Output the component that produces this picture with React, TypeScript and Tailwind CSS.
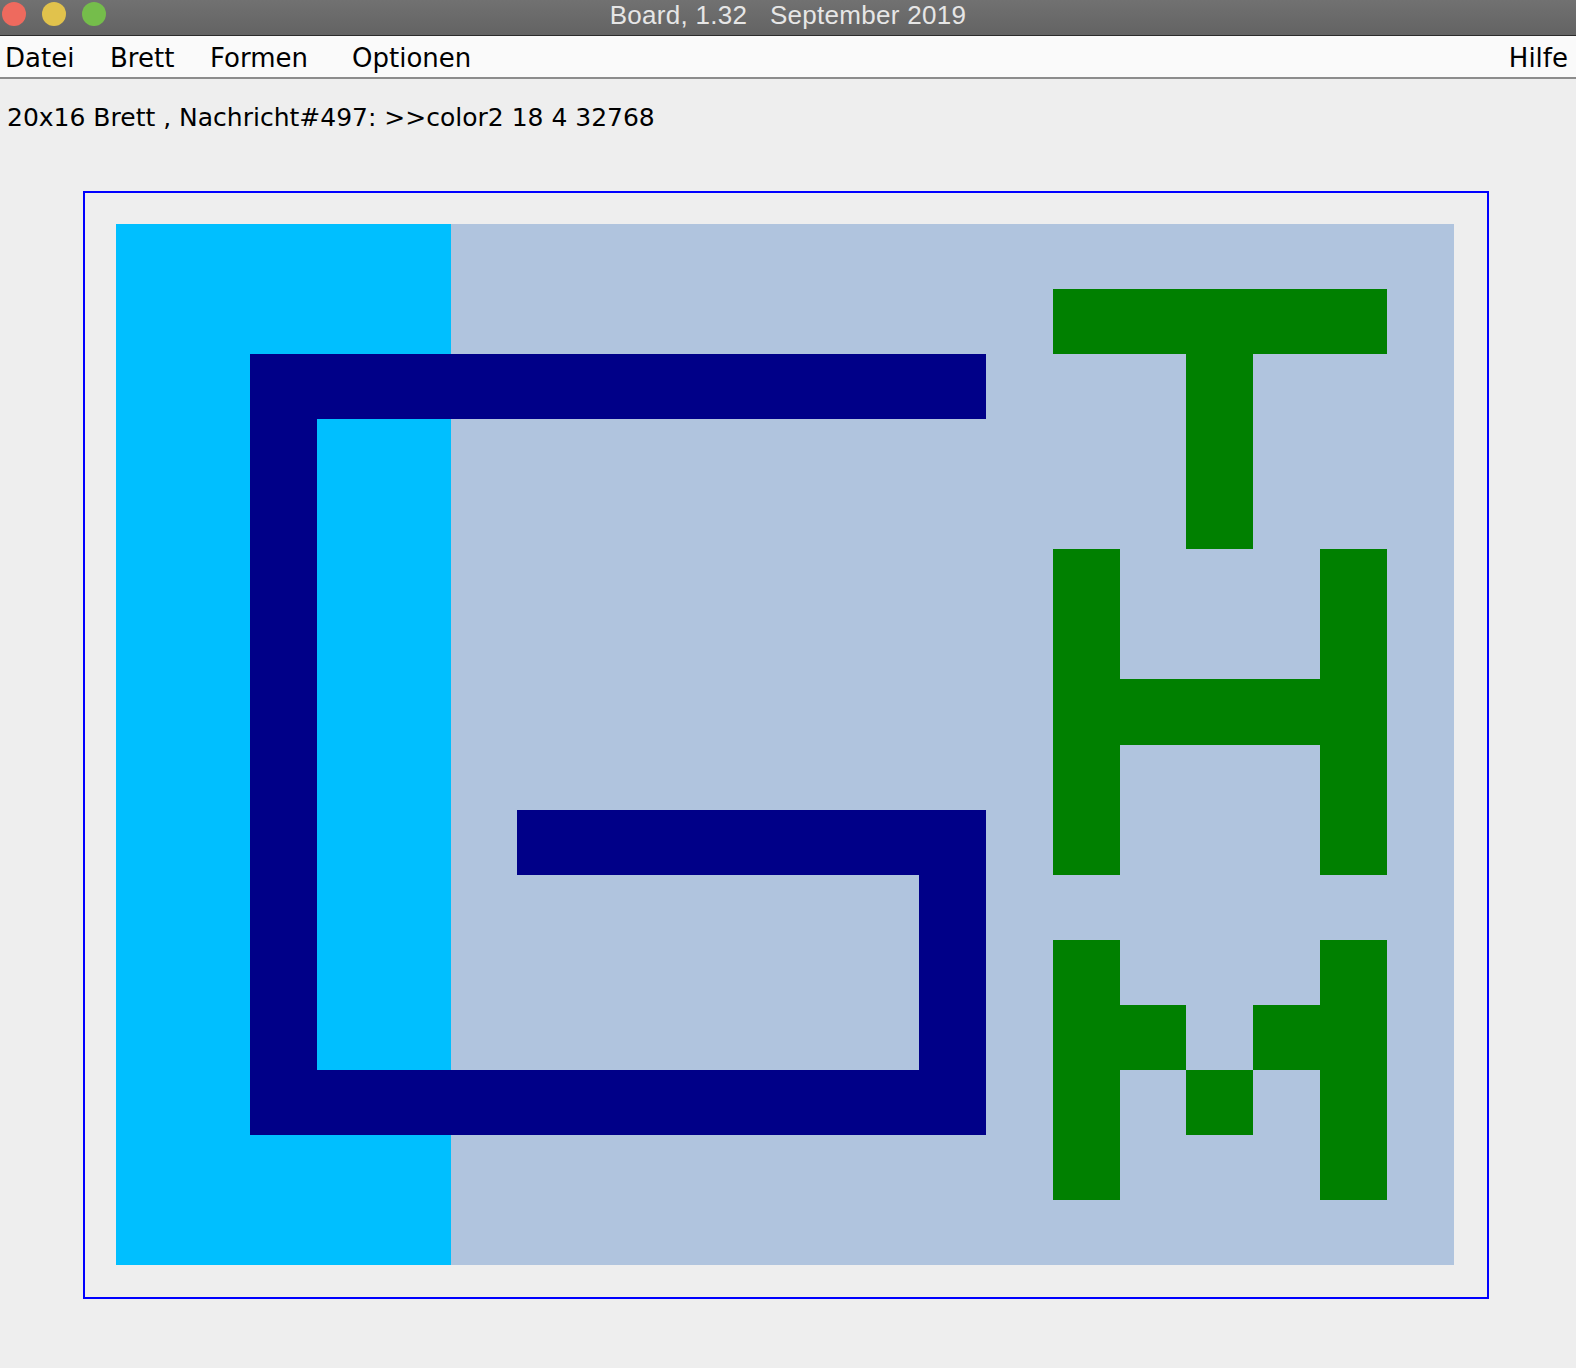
import React from "react";

const menuItems = [
  { label: "Datei", w: "w-[105px]" },
  { label: "Brett", w: "w-[100px]" },
  { label: "Formen", w: "w-[142px]" },
  { label: "Optionen", w: "w-[140px]" },
];

// rectangles on the 20x16 board, grid lines written out in full
const cells = [
  { cls: "col-start-1 col-end-6 row-start-1 row-end-17", color: "bg-[#00bfff]" },
  // G
  { cls: "col-start-3 col-end-14 row-start-3 row-end-4", color: "bg-[#000088]" },
  { cls: "col-start-3 col-end-4 row-start-3 row-end-15", color: "bg-[#000088]" },
  { cls: "col-start-3 col-end-14 row-start-14 row-end-15", color: "bg-[#000088]" },
  { cls: "col-start-13 col-end-14 row-start-10 row-end-15", color: "bg-[#000088]" },
  { cls: "col-start-7 col-end-14 row-start-10 row-end-11", color: "bg-[#000088]" },
  // T
  { cls: "col-start-15 col-end-20 row-start-2 row-end-3", color: "bg-[#008000]" },
  { cls: "col-start-17 col-end-18 row-start-3 row-end-6", color: "bg-[#008000]" },
  // H
  { cls: "col-start-15 col-end-16 row-start-6 row-end-11", color: "bg-[#008000]" },
  { cls: "col-start-19 col-end-20 row-start-6 row-end-11", color: "bg-[#008000]" },
  { cls: "col-start-15 col-end-20 row-start-8 row-end-9", color: "bg-[#008000]" },
  // M
  { cls: "col-start-15 col-end-16 row-start-12 row-end-16", color: "bg-[#008000]" },
  { cls: "col-start-19 col-end-20 row-start-12 row-end-16", color: "bg-[#008000]" },
  { cls: "col-start-16 col-end-17 row-start-13 row-end-14", color: "bg-[#008000]" },
  { cls: "col-start-18 col-end-19 row-start-13 row-end-14", color: "bg-[#008000]" },
  { cls: "col-start-17 col-end-18 row-start-14 row-end-15", color: "bg-[#008000]" },
];

const TitleBar = () => (
  <div className="relative h-[36px] bg-gradient-to-b from-[#717171] to-[#636363] border-b border-[#2b2b2b] flex justify-center">
    <div className="absolute left-[2px] top-[2px] flex gap-[16px]">
      <span className="w-[24px] h-[24px] rounded-full bg-[#ee6a5e]" />
      <span className="w-[24px] h-[24px] rounded-full bg-[#e1c24c]" />
      <span className="w-[24px] h-[24px] rounded-full bg-[#75bd4b]" />
    </div>
    <span className="text-[26px] leading-[30px] tracking-[0.3px] text-[#e6e6e6] font-['Liberation_Sans',sans-serif] whitespace-pre">
      Board, 1.32   September 2019
    </span>
  </div>
);

const MenuBar = () => (
  <div className="h-[43px] bg-[#fafafa] border-b-2 border-[#8c8c8c] flex items-center justify-between pt-[4px] pl-[5px] pr-[8px] font-['DejaVu_Sans',sans-serif] text-[26px] text-black">
    <div className="flex">
      {menuItems.map((item) => (
        <span key={item.label} className={item.w}>
          {item.label}
        </span>
      ))}
    </div>
    <span>Hilfe</span>
  </div>
);

export default function App() {
  return (
    <div className="w-[1576px] h-[1368px] bg-[#eeeeee] overflow-hidden">
      <TitleBar />
      <MenuBar />
      <div className="h-[112px] pl-[7px] pt-[20px] font-['DejaVu_Sans',sans-serif] text-[25px] text-black">
        20x16 Brett , Nachricht#497: &gt;&gt;color2 18 4 32768
      </div>
      <div className="ml-[83px] w-[1406px] h-[1108px] border-2 border-[#0000ff] pl-[31px] pt-[31px]">
        <div className="w-[1338px] h-[1041px] bg-[#b0c4de] grid grid-cols-[repeat(20,1fr)] grid-rows-[repeat(16,1fr)]">
          {cells.map((c, i) => (
            <div key={i} className={`${c.cls} ${c.color}`} />
          ))}
        </div>
      </div>
    </div>
  );
}
